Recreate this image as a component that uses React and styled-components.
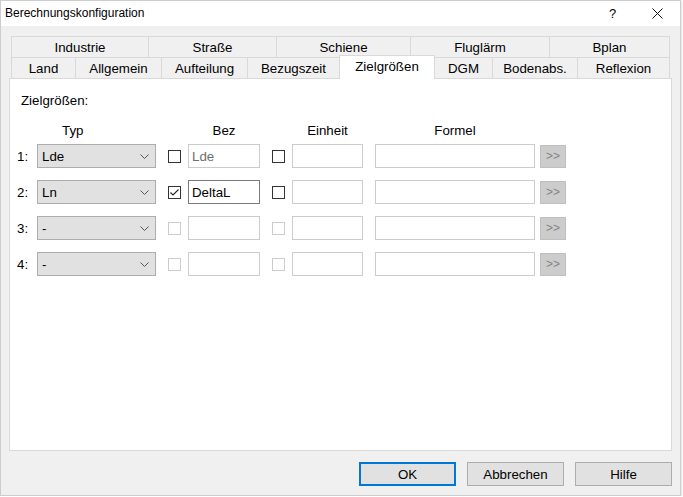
import React from 'react'
import styled, { createGlobalStyle } from 'styled-components'

const Global = createGlobalStyle`
  html, body { margin: 0; padding: 0; background: #ffffff; }
  body { font-family: "Liberation Sans", Arial, sans-serif; font-size: 13.3px; color: #000; }
`

const topTabs = [
  { label: 'Industrie', w: 137 },
  { label: 'Straße', w: 128 },
  { label: 'Schiene', w: 134 },
  { label: 'Fluglärm', w: 139 },
  { label: 'Bplan', w: 120 },
]

const bottomTabs = [
  { label: 'Land', w: 64 },
  { label: 'Allgemein', w: 86 },
  { label: 'Aufteilung', w: 86 },
  { label: 'Bezugszeit', w: 92 },
  { label: 'Zielgrößen', w: 95, active: true },
  { label: 'DGM', w: 58 },
  { label: 'Bodenabs.', w: 85 },
  { label: 'Reflexion', w: 92 },
]

const rows = [
  { n: 1, typ: 'Lde', enabled: true, checked: false, bez: 'Lde', muted: true },
  { n: 2, typ: 'Ln', enabled: true, checked: true, bez: 'DeltaL', focused: true },
  { n: 3, typ: '-', enabled: false },
  { n: 4, typ: '-', enabled: false },
]

const Chevron = () => (
  <svg width="9" height="5" viewBox="0 0 9 5">
    <polyline points="0.5,0.5 4.5,4.5 8.5,0.5" fill="none" stroke="#555" strokeWidth="1" />
  </svg>
)

const Tick = () => (
  <svg width="11" height="11" viewBox="0 0 11 11">
    <polyline points="1.5,5.5 4,8 9.5,2.5" fill="none" stroke="#222" strokeWidth="1.1" />
  </svg>
)

const App = () => {
  return (
    <>
      <Global />
      <Window>
        <TitleBar>
          <Title>Berechnungskonfiguration</Title>
          <TitleButton $pl={3}>?</TitleButton>
          <TitleButton>
            <svg width="11" height="11" viewBox="0 0 11 11">
              <path d="M0.5 0.5 L10.5 10.5 M10.5 0.5 L0.5 10.5" stroke="#111" strokeWidth="1" />
            </svg>
          </TitleButton>
        </TitleBar>
        <Body>
          <TabStrip>
            <TabRow>
              {topTabs.map(t => (
                <Tab key={t.label} $w={t.w}>{t.label}</Tab>
              ))}
            </TabRow>
            <TabRow>
              {bottomTabs.map(t => (
                <Tab key={t.label} $w={t.w} $active={t.active}>{t.label}</Tab>
              ))}
            </TabRow>
          </TabStrip>
          <Panel>
            <Heading>Zielgrößen:</Heading>
            <HeaderRow>
              <HeadCell $w={119} $ml={20} $pl={25}>Typ</HeadCell>
              <HeadCell $w={72} $ml={32} $center>Bez</HeadCell>
              <HeadCell $w={71} $ml={32} $center>Einheit</HeadCell>
              <HeadCell $w={160} $ml={12} $center>Formel</HeadCell>
            </HeaderRow>
            <Rows>
              {rows.map(r => (
                <Row key={r.n}>
                  <RowLabel>{r.n}:</RowLabel>
                  <Select>
                    <span>{r.typ}</span>
                    <Chevron />
                  </Select>
                  <Check $enabled={r.enabled}>{r.checked && <Tick />}</Check>
                  <Field $w={72} $ml={7} $muted={r.muted} $focused={r.focused}>{r.bez}</Field>
                  <Check $enabled={r.enabled} />
                  <Field $w={71} $ml={7} />
                  <Field $w={160} $ml={12} />
                  <MoreButton>&gt;&gt;</MoreButton>
                </Row>
              ))}
            </Rows>
          </Panel>
          <ButtonBar>
            <DialogButton $default>OK</DialogButton>
            <DialogButton>Abbrechen</DialogButton>
            <DialogButton>Hilfe</DialogButton>
          </ButtonBar>
        </Body>
      </Window>
    </>
  )
}

const Window = styled.div`
  box-sizing: border-box;
  width: 681px;
  height: 496px;
  border: 1px solid #cdcdcd;
  display: flex;
  flex-direction: column;
  box-shadow: 1px 1px 2px rgba(0, 0, 0, 0.12);
`
const TitleBar = styled.div`
  height: 25px;
  background: #ffffff;
  display: flex;
  align-items: center;
  padding-left: 4px;
`
const Title = styled.div`
  flex: 1;
  font-size: 12px;
  margin-top: -1px;
`
const TitleButton = styled.div`
  box-sizing: border-box;
  width: 46px;
  display: flex;
  justify-content: center;
  align-items: center;
  font-size: 13px;
  margin-top: -1px;
  padding-left: ${p => p.$pl || 0}px;
`
const Body = styled.div`
  flex: 1;
  background: #f0f0f0;
  display: flex;
  flex-direction: column;
  padding: 10px 8px 9px 8px;
`
const TabStrip = styled.div`
  padding: 0 2px;
  display: flex;
  flex-direction: column;
`
const TabRow = styled.div`
  display: flex;
  height: 21px;
`
const Tab = styled.div`
  box-sizing: border-box;
  width: ${p => p.$w}px;
  border-top: 1px solid #d9d9d9;
  border-left: 1px solid #d9d9d9;
  &:last-child { width: ${p => p.$w + 1}px; border-right: 1px solid #d9d9d9; }
  background: ${p => (p.$active ? '#ffffff' : '#f0f0f0')};
  display: flex;
  justify-content: center;
  align-items: center;
  padding-top: 1px;
  ${p => p.$active && `
    position: relative;
    z-index: 1;
    height: 24px;
    margin-top: -2px;
    border-right: 1px solid #d9d9d9;
    width: ${p.$w + 1}px;
    margin-right: -1px;
    padding-bottom: 3px;
  `}
`
const Panel = styled.div`
  box-sizing: border-box;
  height: 373px;
  background: #ffffff;
  border: 1px solid #d9d9d9;
  padding: 14px 0 0 7px;
`
const Heading = styled.div`
  height: 16px;
  line-height: 16px;
  margin-left: 4px;
`
const HeaderRow = styled.div`
  display: flex;
  margin-top: 14px;
  height: 16px;
  line-height: 16px;
`
const HeadCell = styled.div`
  box-sizing: border-box;
  width: ${p => p.$w}px;
  margin-left: ${p => p.$ml}px;
  padding-left: ${p => p.$pl || 0}px;
  text-align: ${p => (p.$center ? 'center' : 'left')};
`
const Rows = styled.div`
  display: flex;
  flex-direction: column;
  gap: 12px;
  margin-top: 5px;
`
const Row = styled.div`
  display: flex;
  align-items: center;
  height: 24px;
`
const RowLabel = styled.div`
  width: 20px;
`
const Select = styled.div`
  box-sizing: border-box;
  width: 119px;
  height: 24px;
  background: #e1e1e1;
  border: 1px solid #adadad;
  display: flex;
  align-items: center;
  justify-content: space-between;
  padding: 0 6px 0 4px;
`
const Check = styled.div`
  box-sizing: border-box;
  width: 13px;
  height: 13px;
  margin-left: 12px;
  background: #ffffff;
  border: 1px solid ${p => (p.$enabled ? '#333333' : '#cccccc')};
  display: flex;
  align-items: center;
  justify-content: center;
`
const Field = styled.div`
  box-sizing: border-box;
  width: ${p => p.$w}px;
  margin-left: ${p => p.$ml}px;
  height: 24px;
  border: 1px solid ${p => (p.$focused ? '#7a7a7a' : '#cccccc')};
  color: ${p => (p.$muted ? '#6d6d6d' : '#000000')};
  display: flex;
  align-items: center;
  padding-left: 3px;
`
const MoreButton = styled.div`
  box-sizing: border-box;
  width: 26px;
  height: 23px;
  margin-left: 5px;
  background: #cccccc;
  border: 1px solid #bfbfbf;
  color: #838383;
  font-size: 12px;
  display: flex;
  align-items: center;
  justify-content: center;
`
const ButtonBar = styled.div`
  display: flex;
  justify-content: flex-end;
  gap: 11px;
  margin-top: 11px;
`
const DialogButton = styled.div`
  box-sizing: border-box;
  width: 97px;
  height: 24px;
  background: #e1e1e1;
  border: ${p => (p.$default ? '2px solid #0078d7' : '1px solid #adadad')};
  display: flex;
  align-items: center;
  justify-content: center;
`

export default App
